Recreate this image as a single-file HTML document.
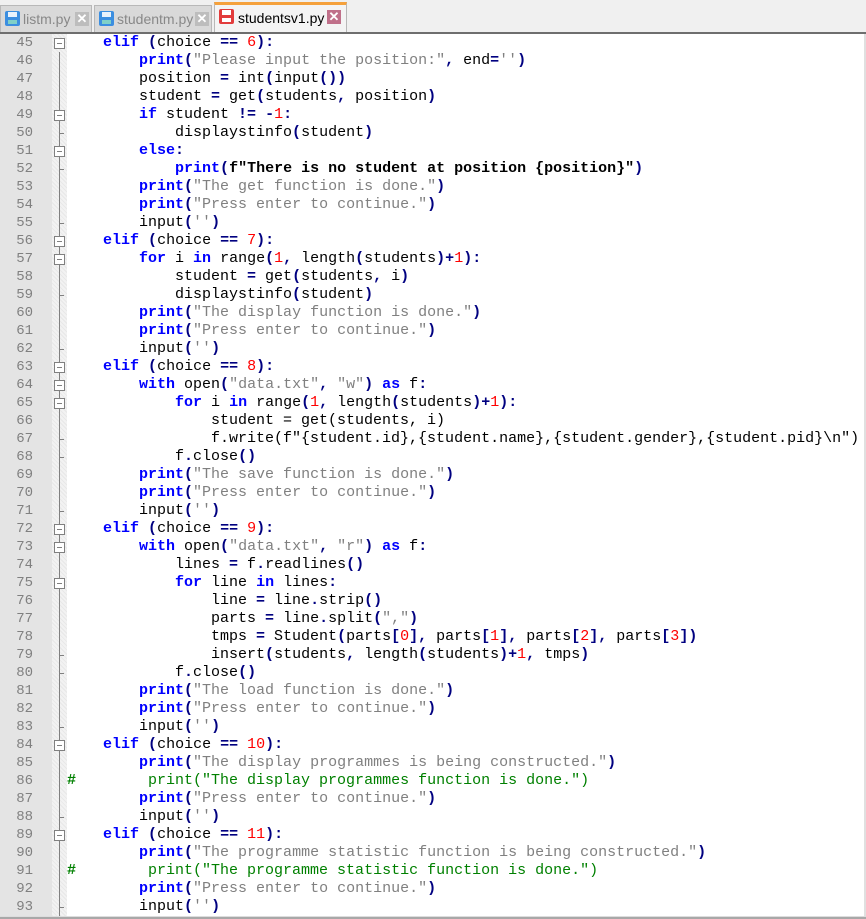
<!DOCTYPE html>
<html><head><meta charset="utf-8"><style>
*{margin:0;padding:0;box-sizing:border-box}
body{width:866px;height:919px;overflow:hidden;background:#fff;font-family:"Liberation Mono",monospace;position:relative}
#tabs{position:absolute;left:0;top:0;width:866px;height:32px;background:#f0f0f0}
#tabline{position:absolute;left:0;top:32px;width:866px;height:2px;background:#6e6e6e}
.tab{position:absolute;top:5px;height:27px;background:#d9d9d9;border:1px solid #b8b8b8;border-bottom:none;font-family:"Liberation Sans",sans-serif;font-size:14px;color:#888;line-height:26px}
.tab.act{top:2px;height:30px;background:#f4f4f4;color:#000;border-top:3px solid #f5a13c;line-height:26px}
.ico{position:absolute;left:4px;top:5px;width:15px;height:15px;border-radius:2px;background:#3b8ee0}
.ico:before{content:"";position:absolute;left:3px;top:1px;width:9px;height:5px;background:#e8f2fc}
.ico:after{content:"";position:absolute;left:3px;top:9px;width:9px;height:4px;background:#7fd0c8}
.act .ico{background:#e23c3c}
.act .ico:before{background:#fff}.act .ico:after{background:#fff}
.x{position:absolute;top:6px;width:14px;height:14px;background:#bdbdbd;color:#fff;font-size:13px;line-height:14px;text-align:center;font-weight:bold}
.act .x{background:#c0708a}
#gut{position:absolute;left:0;top:34px;width:52px;height:882px;background:#e4e4e4}
#fold{position:absolute;left:52px;top:34px;width:15px;height:882px;background:#f2f2f2;background-image:repeating-linear-gradient(45deg,#e8e8e8 0 1px,transparent 1px 3px)}
#fl{position:absolute;left:59px;top:52px;width:1px;height:864px;background:#808080}
.fb{position:absolute;left:54px;width:11px;height:11px;border:1px solid #808080;background:#fff}
.fb:after{content:"";position:absolute;left:2px;top:4px;width:5px;height:1px;background:#808080}
.tk{position:absolute;left:59px;width:5px;height:1px;background:#808080}
#bot{position:absolute;left:0;top:916px;width:866px;height:3px;background:#a8a8a8;border-top:1px solid #ddd}
#rb{position:absolute;left:864px;top:34px;width:2px;height:882px;background:#e0e0e0}
.ln{position:absolute;left:0;width:33px;text-align:right;font-size:14px;color:#808080;height:18px;line-height:18px}
.cl{position:absolute;left:67px;white-space:pre;font-size:15px;height:18px;line-height:18px;color:#000}
k{color:#0000ff;font-weight:bold}
o{color:#000080;font-weight:bold}
n{color:#ff0000}
st{color:#808080}
c{color:#008000}
bb{font-weight:bold}
</style></head><body>
<div id="tabs">
<div class="tab" style="left:0;width:92px"><span class="ico"></span><span style="position:absolute;left:22px">listm.py</span><span class="x" style="left:74px">✕</span></div>
<div class="tab" style="left:94px;width:118px"><span class="ico"></span><span style="position:absolute;left:22px">studentm.py</span><span class="x" style="left:100px">✕</span></div>
<div class="tab act" style="left:214px;width:133px"><span class="ico" style="top:4px"></span><span style="position:absolute;left:23px">studentsv1.py</span><span class="x" style="left:112px;top:5px">✕</span></div>
</div>
<div id="tabline"></div>
<div id="gut"></div><div id="fold"></div><div id="fl"></div><div id="rb"></div>
<div id="bot"></div>
<div id="code">
<div class="cl" style="top:34px">    <k>elif</k> <o>(</o>choice <o>==</o> <n>6</n><o>):</o></div>
<div class="cl" style="top:52px">        <k>print</k><o>(</o><st>"Please input the position:"</st><o>,</o> end<o>=</o><st>''</st><o>)</o></div>
<div class="cl" style="top:70px">        position <o>=</o> int<o>(</o>input<o>())</o></div>
<div class="cl" style="top:88px">        student <o>=</o> get<o>(</o>students<o>,</o> position<o>)</o></div>
<div class="cl" style="top:106px">        <k>if</k> student <o>!=</o> <o>-</o><n>1</n><o>:</o></div>
<div class="cl" style="top:124px">            displaystinfo<o>(</o>student<o>)</o></div>
<div class="cl" style="top:142px">        <k>else</k><o>:</o></div>
<div class="cl" style="top:160px">            <k>print</k><o>(</o><bb>f"There is no student at position {position}"</bb><o>)</o></div>
<div class="cl" style="top:178px">        <k>print</k><o>(</o><st>"The get function is done."</st><o>)</o></div>
<div class="cl" style="top:196px">        <k>print</k><o>(</o><st>"Press enter to continue."</st><o>)</o></div>
<div class="cl" style="top:214px">        input<o>(</o><st>''</st><o>)</o></div>
<div class="cl" style="top:232px">    <k>elif</k> <o>(</o>choice <o>==</o> <n>7</n><o>):</o></div>
<div class="cl" style="top:250px">        <k>for</k> i <k>in</k> range<o>(</o><n>1</n><o>,</o> length<o>(</o>students<o>)+</o><n>1</n><o>):</o></div>
<div class="cl" style="top:268px">            student <o>=</o> get<o>(</o>students<o>,</o> i<o>)</o></div>
<div class="cl" style="top:286px">            displaystinfo<o>(</o>student<o>)</o></div>
<div class="cl" style="top:304px">        <k>print</k><o>(</o><st>"The display function is done."</st><o>)</o></div>
<div class="cl" style="top:322px">        <k>print</k><o>(</o><st>"Press enter to continue."</st><o>)</o></div>
<div class="cl" style="top:340px">        input<o>(</o><st>''</st><o>)</o></div>
<div class="cl" style="top:358px">    <k>elif</k> <o>(</o>choice <o>==</o> <n>8</n><o>):</o></div>
<div class="cl" style="top:376px">        <k>with</k> open<o>(</o><st>"data.txt"</st><o>,</o> <st>"w"</st><o>)</o> <k>as</k> f<o>:</o></div>
<div class="cl" style="top:394px">            <k>for</k> i <k>in</k> range<o>(</o><n>1</n><o>,</o> length<o>(</o>students<o>)+</o><n>1</n><o>):</o></div>
<div class="cl" style="top:412px">                student = get(students, i)</div>
<div class="cl" style="top:430px">                f.write(f"{student.id},{student.name},{student.gender},{student.pid}\n")</div>
<div class="cl" style="top:448px">            f<o>.</o>close<o>()</o></div>
<div class="cl" style="top:466px">        <k>print</k><o>(</o><st>"The save function is done."</st><o>)</o></div>
<div class="cl" style="top:484px">        <k>print</k><o>(</o><st>"Press enter to continue."</st><o>)</o></div>
<div class="cl" style="top:502px">        input<o>(</o><st>''</st><o>)</o></div>
<div class="cl" style="top:520px">    <k>elif</k> <o>(</o>choice <o>==</o> <n>9</n><o>):</o></div>
<div class="cl" style="top:538px">        <k>with</k> open<o>(</o><st>"data.txt"</st><o>,</o> <st>"r"</st><o>)</o> <k>as</k> f<o>:</o></div>
<div class="cl" style="top:556px">            lines <o>=</o> f<o>.</o>readlines<o>()</o></div>
<div class="cl" style="top:574px">            <k>for</k> line <k>in</k> lines<o>:</o></div>
<div class="cl" style="top:592px">                line <o>=</o> line<o>.</o>strip<o>()</o></div>
<div class="cl" style="top:610px">                parts <o>=</o> line<o>.</o>split<o>(</o><st>","</st><o>)</o></div>
<div class="cl" style="top:628px">                tmps <o>=</o> Student<o>(</o>parts<o>[</o><n>0</n><o>],</o> parts<o>[</o><n>1</n><o>],</o> parts<o>[</o><n>2</n><o>],</o> parts<o>[</o><n>3</n><o>])</o></div>
<div class="cl" style="top:646px">                insert<o>(</o>students<o>,</o> length<o>(</o>students<o>)+</o><n>1</n><o>,</o> tmps<o>)</o></div>
<div class="cl" style="top:664px">            f<o>.</o>close<o>()</o></div>
<div class="cl" style="top:682px">        <k>print</k><o>(</o><st>"The load function is done."</st><o>)</o></div>
<div class="cl" style="top:700px">        <k>print</k><o>(</o><st>"Press enter to continue."</st><o>)</o></div>
<div class="cl" style="top:718px">        input<o>(</o><st>''</st><o>)</o></div>
<div class="cl" style="top:736px">    <k>elif</k> <o>(</o>choice <o>==</o> <n>10</n><o>):</o></div>
<div class="cl" style="top:754px">        <k>print</k><o>(</o><st>"The display programmes is being constructed."</st><o>)</o></div>
<div class="cl" style="top:772px"><c><bb>#</bb>        print("The display programmes function is done.")</c></div>
<div class="cl" style="top:790px">        <k>print</k><o>(</o><st>"Press enter to continue."</st><o>)</o></div>
<div class="cl" style="top:808px">        input<o>(</o><st>''</st><o>)</o></div>
<div class="cl" style="top:826px">    <k>elif</k> <o>(</o>choice <o>==</o> <n>11</n><o>):</o></div>
<div class="cl" style="top:844px">        <k>print</k><o>(</o><st>"The programme statistic function is being constructed."</st><o>)</o></div>
<div class="cl" style="top:862px"><c><bb>#</bb>        print("The programme statistic function is done.")</c></div>
<div class="cl" style="top:880px">        <k>print</k><o>(</o><st>"Press enter to continue."</st><o>)</o></div>
<div class="cl" style="top:898px">        input<o>(</o><st>''</st><o>)</o></div>
</div>
<div class="ln" style="top:34px">45</div><div class="ln" style="top:52px">46</div><div class="ln" style="top:70px">47</div><div class="ln" style="top:88px">48</div><div class="ln" style="top:106px">49</div><div class="ln" style="top:124px">50</div><div class="ln" style="top:142px">51</div><div class="ln" style="top:160px">52</div><div class="ln" style="top:178px">53</div><div class="ln" style="top:196px">54</div><div class="ln" style="top:214px">55</div><div class="ln" style="top:232px">56</div><div class="ln" style="top:250px">57</div><div class="ln" style="top:268px">58</div><div class="ln" style="top:286px">59</div><div class="ln" style="top:304px">60</div><div class="ln" style="top:322px">61</div><div class="ln" style="top:340px">62</div><div class="ln" style="top:358px">63</div><div class="ln" style="top:376px">64</div><div class="ln" style="top:394px">65</div><div class="ln" style="top:412px">66</div><div class="ln" style="top:430px">67</div><div class="ln" style="top:448px">68</div><div class="ln" style="top:466px">69</div><div class="ln" style="top:484px">70</div><div class="ln" style="top:502px">71</div><div class="ln" style="top:520px">72</div><div class="ln" style="top:538px">73</div><div class="ln" style="top:556px">74</div><div class="ln" style="top:574px">75</div><div class="ln" style="top:592px">76</div><div class="ln" style="top:610px">77</div><div class="ln" style="top:628px">78</div><div class="ln" style="top:646px">79</div><div class="ln" style="top:664px">80</div><div class="ln" style="top:682px">81</div><div class="ln" style="top:700px">82</div><div class="ln" style="top:718px">83</div><div class="ln" style="top:736px">84</div><div class="ln" style="top:754px">85</div><div class="ln" style="top:772px">86</div><div class="ln" style="top:790px">87</div><div class="ln" style="top:808px">88</div><div class="ln" style="top:826px">89</div><div class="ln" style="top:844px">90</div><div class="ln" style="top:862px">91</div><div class="ln" style="top:880px">92</div><div class="ln" style="top:898px">93</div>
<div class="fb" style="top:38px"></div><div class="fb" style="top:110px"></div><div class="fb" style="top:146px"></div><div class="fb" style="top:236px"></div><div class="fb" style="top:254px"></div><div class="fb" style="top:362px"></div><div class="fb" style="top:380px"></div><div class="fb" style="top:398px"></div><div class="fb" style="top:524px"></div><div class="fb" style="top:542px"></div><div class="fb" style="top:578px"></div><div class="fb" style="top:740px"></div><div class="fb" style="top:830px"></div>
<div class="tk" style="top:133px"></div><div class="tk" style="top:169px"></div><div class="tk" style="top:223px"></div><div class="tk" style="top:295px"></div><div class="tk" style="top:349px"></div><div class="tk" style="top:439px"></div><div class="tk" style="top:457px"></div><div class="tk" style="top:511px"></div><div class="tk" style="top:655px"></div><div class="tk" style="top:673px"></div><div class="tk" style="top:727px"></div><div class="tk" style="top:817px"></div><div class="tk" style="top:907px"></div>
</body></html>
